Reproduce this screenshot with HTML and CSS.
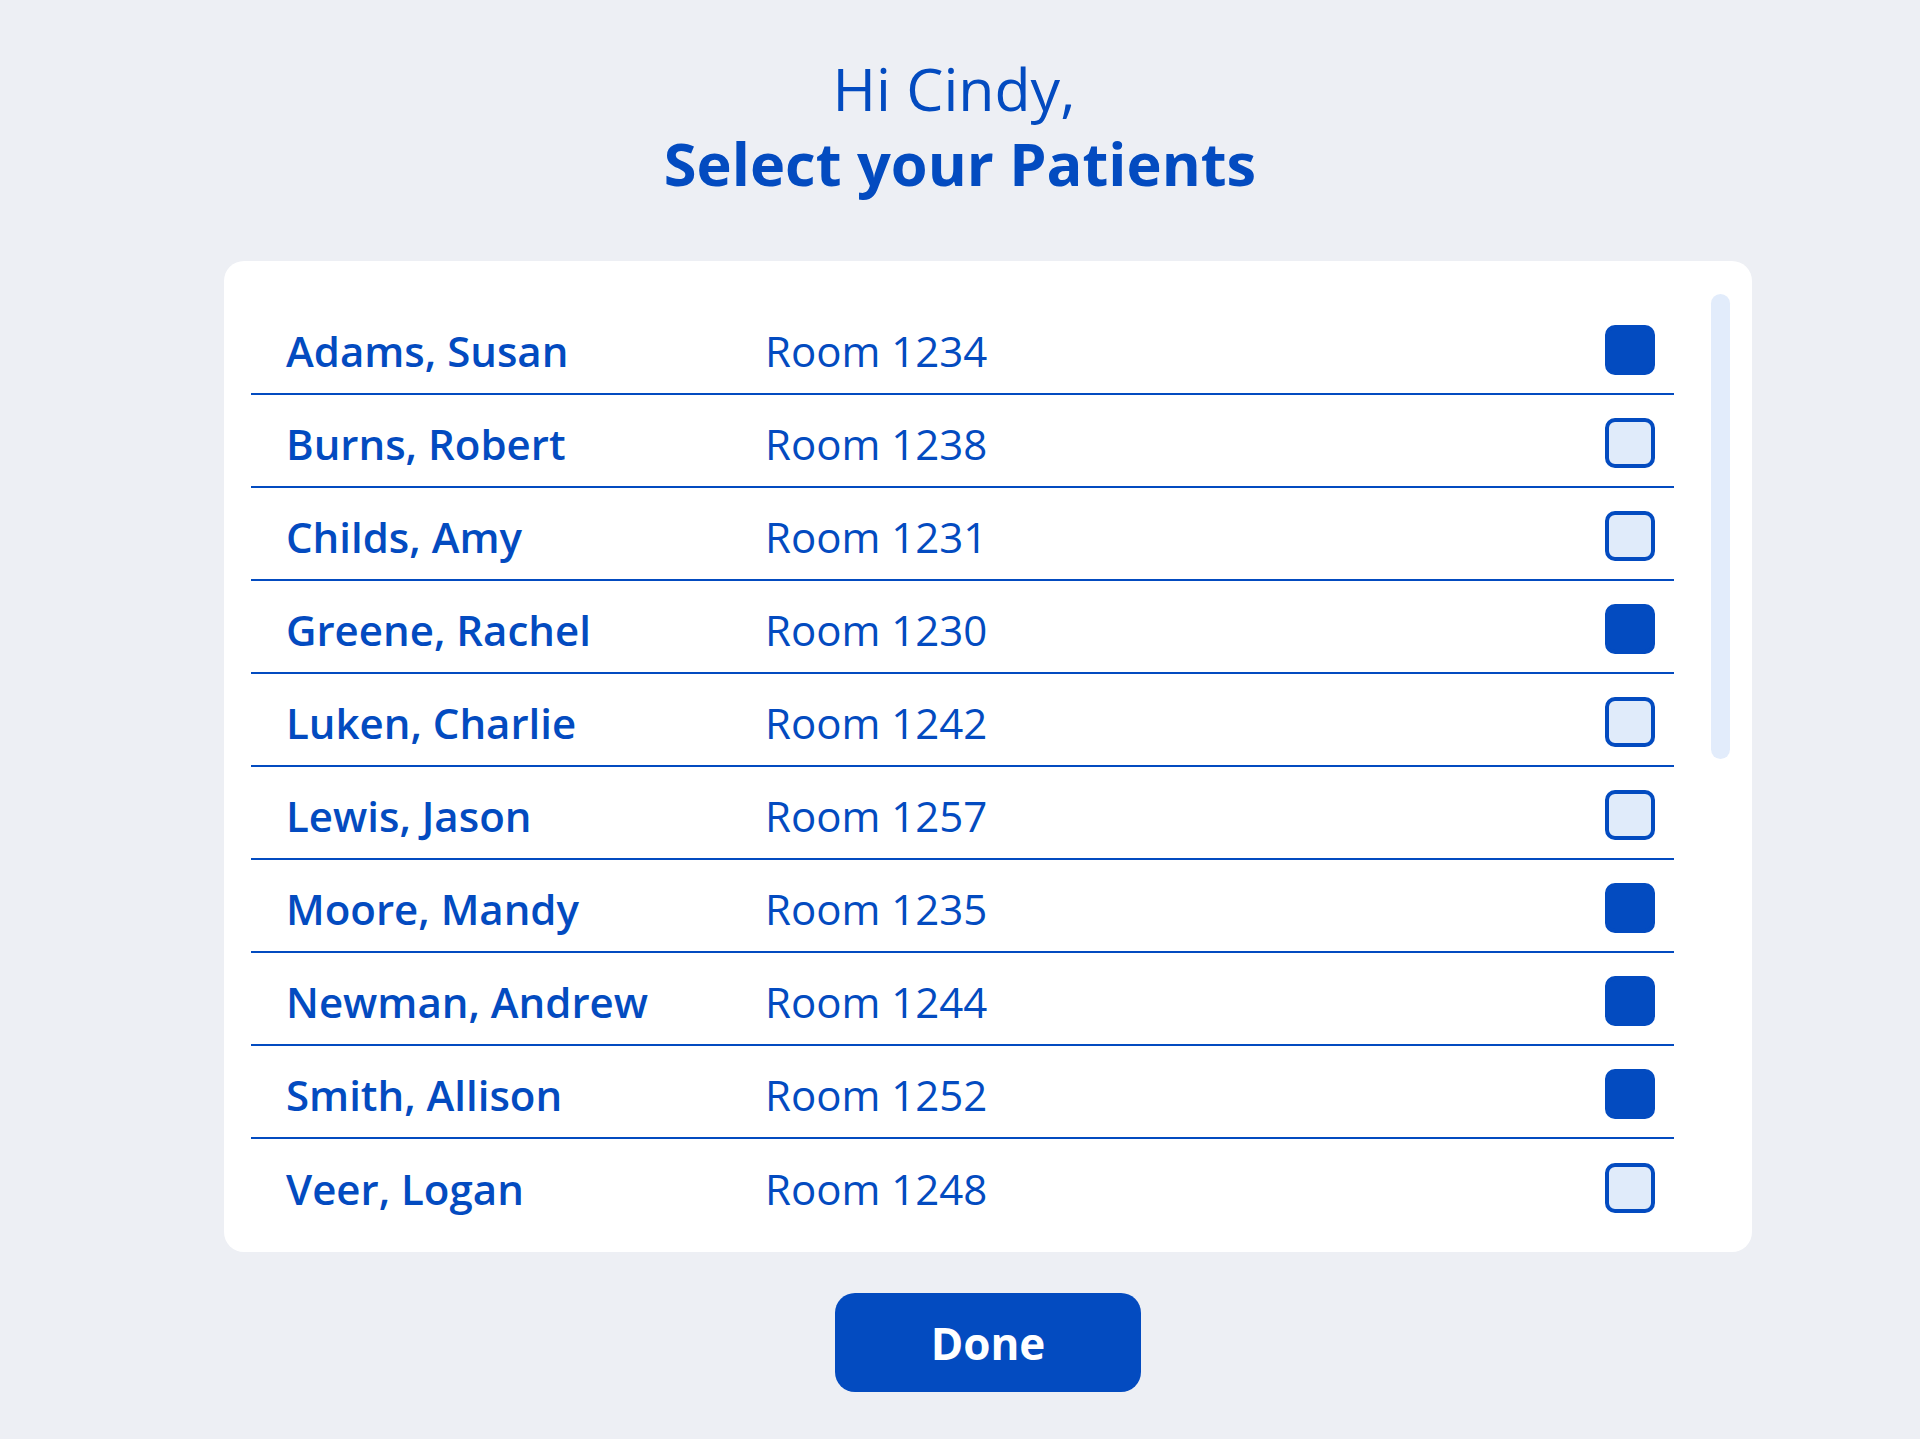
FILE: index.html
```html
<!DOCTYPE html>
<html lang="en">
<head>
<meta charset="utf-8">
<title>Select your Patients</title>
<link rel="stylesheet" href="styles.css">
</head>
<body>
<header class="header">
  <div class="greeting">Hi Cindy,</div>
  <h1 class="title">Select your Patients</h1>
</header>
<main class="content">
  <section class="card">
    <ul class="patients">
      <li class="row"><span class="name">Adams, Susan</span><span class="room">Room 1234</span><span class="check checked"></span></li>
      <li class="row"><span class="name">Burns, Robert</span><span class="room">Room 1238</span><span class="check"></span></li>
      <li class="row"><span class="name">Childs, Amy</span><span class="room">Room 1231</span><span class="check"></span></li>
      <li class="row"><span class="name">Greene, Rachel</span><span class="room">Room 1230</span><span class="check checked"></span></li>
      <li class="row"><span class="name">Luken, Charlie</span><span class="room">Room 1242</span><span class="check"></span></li>
      <li class="row"><span class="name">Lewis, Jason</span><span class="room">Room 1257</span><span class="check"></span></li>
      <li class="row"><span class="name">Moore, Mandy</span><span class="room">Room 1235</span><span class="check checked"></span></li>
      <li class="row"><span class="name">Newman, Andrew</span><span class="room">Room 1244</span><span class="check checked"></span></li>
      <li class="row"><span class="name">Smith, Allison</span><span class="room">Room 1252</span><span class="check checked"></span></li>
      <li class="row"><span class="name">Veer, Logan</span><span class="room">Room 1248</span><span class="check"></span></li>
    </ul>
    <div class="scrollbar"></div>
  </section>
  <div class="actions">
    <button class="done">Done</button>
  </div>
</main>
</body>
</html>
```

FILE: styles.css
```css
html, body {
  margin: 0;
  padding: 0;
}
body {
  background: #edeff4;
  font-family: "Open Sans", "Noto Sans", sans-serif;
  color: #034bc0;
  min-height: 1439px;
}
.header {
  text-align: center;
  padding-top: 51px;
  height: 154px;
}
.greeting {
  font-size: 59px;
  font-weight: 400;
  line-height: 74px;
  padding-right: 12px;
}
.title {
  margin: 0;
  font-size: 59.5px;
  font-weight: 700;
  line-height: 76px;
}
.content {
  margin-left: 224px;
  width: 1528px;
  padding-top: 56px;
}
.card {
  position: relative;
  background: #ffffff;
  border-radius: 20px;
  padding: 41px 78px 20px 27px;
  box-sizing: border-box;
  height: 991px;
}
.patients {
  list-style: none;
  margin: 0;
  padding: 0;
}
.row {
  display: flex;
  align-items: center;
  height: 93px;
  box-sizing: border-box;
  border-bottom: 2px solid #034bc0;
  padding-left: 35px;
  padding-right: 19px;
  padding-top: 5px;
}
.row:last-child {
  border-bottom: none;
}
.name {
  width: 479px;
  font-size: 42px;
  font-weight: 600;
}
.room {
  flex: 1;
  font-size: 42px;
  font-weight: 400;
}
.check {
  width: 50px;
  height: 50px;
  box-sizing: border-box;
  border-radius: 10px;
  border: 4px solid #034bc0;
  background: #e0ebfa;
}
.check.checked {
  background: #034bc0;
}
.scrollbar {
  position: absolute;
  top: 33px;
  right: 22px;
  width: 19px;
  height: 465px;
  border-radius: 10px;
  background: #e2ecfb;
}
.actions {
  display: flex;
  justify-content: center;
  padding-top: 41px;
}
.done {
  width: 306px;
  height: 99px;
  border: none;
  border-radius: 20px;
  background: #034bc0;
  color: #ffffff;
  font-family: "Open Sans", "Noto Sans", sans-serif;
  font-size: 44px;
  font-weight: 700;
  padding: 0;
}
```
